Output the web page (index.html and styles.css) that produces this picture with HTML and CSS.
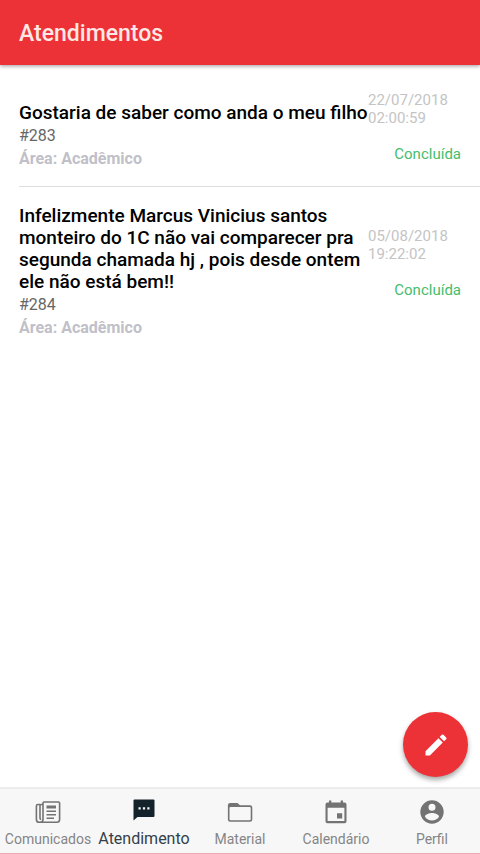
FILE: index.html
```html
<!DOCTYPE html>
<html lang="pt-BR">
<head>
<meta charset="utf-8">
<meta name="viewport" content="width=device-width, initial-scale=1">
<title>Atendimentos</title>
<link rel="stylesheet" href="styles.css">
</head>
<body>
<header class="toolbar"><h1 class="toolbar-title">Atendimentos</h1></header>
<main class="content">
  <ul class="list">
    <li class="item">
      <div class="item-text">
        <h2 class="item-title">Gostaria de saber como anda o meu filho</h2>
        <p class="item-id">#283</p>
        <p class="item-area">Área: Acadêmico</p>
      </div>
      <div class="item-meta">
        <time class="item-date" datetime="2018-07-22T02:00:59">22/07/2018 02:00:59</time>
        <span class="item-status">Concluída</span>
      </div>
    </li>
    <li class="item">
      <div class="item-text">
        <h2 class="item-title">Infelizmente Marcus Vinicius santos monteiro do 1C não vai comparecer pra segunda chamada hj , pois desde ontem ele não está bem!!</h2>
        <p class="item-id">#284</p>
        <p class="item-area">Área: Acadêmico</p>
      </div>
      <div class="item-meta">
        <time class="item-date" datetime="2018-08-05T19:22:02">05/08/2018 19:22:02</time>
        <span class="item-status">Concluída</span>
      </div>
    </li>
  </ul>
</main>
<button class="fab" type="button" aria-label="Novo atendimento">
  <svg class="fab-icon" viewBox="0 0 24 24" aria-hidden="true"><path d="M3 17.25V21h3.75L17.81 9.94l-3.75-3.75L3 17.25zM20.71 7.04a1 1 0 0 0 0-1.41l-2.34-2.34a1 1 0 0 0-1.41 0l-1.83 1.83 3.75 3.75 1.83-1.83z"/></svg>
</button>
<nav class="tabs">
  <a class="tab" href="#comunicados">
    <svg class="tab-icon" viewBox="0 0 28 28" aria-hidden="true">
      <g fill="none" stroke="currentColor" stroke-width="1.6" stroke-linejoin="round">
        <path d="M10 4h14.6q1 0 1 1v16.500q0 2.700-2.700 2.700H5.200q-2.800 0-2.800-2.800V8q0-1.500 1.500-1.500H6"/>
        <path d="M10 4q-1 0-1 1v16.400q0 2.800-2.500 2.800"/>
        <path d="M9 6.500H7q-1 0-1 1V20q0 1.500 1.200 1.500"/>
      </g>
      <path d="M12.500 7.500H22v3H12.500zM12.500 12.500H22V14H12.500zM12.500 16H22v1.500H12.500zM12.500 19.500H20V21H12.500z"/>
    </svg>
    <span class="tab-label">Comunicados</span>
  </a>
  <a class="tab tab-active" href="#atendimento" aria-current="page">
    <svg class="tab-icon" viewBox="0 0 28 28" aria-hidden="true"><path fill-rule="evenodd" d="M4.500 3.500h19q1 0 1 1v15.500q0 1-1 1H7.500L3.500 24.500V4.500q0-1 1-1zM8.500 11.200v2.200h2.200v-2.200zM12.900 11.200v2.200h2.200v-2.200zM17.300 11.200v2.200h2.200v-2.200z"/></svg>
    <span class="tab-label">Atendimento</span>
  </a>
  <a class="tab" href="#material">
    <svg class="tab-icon" viewBox="0 0 28 28" aria-hidden="true"><path fill-rule="evenodd" d="M4.200 5h7.300l2.500 2.300h10q2.300 0 2.300 2.300v11.900q0 2.300-2.300 2.300H4.200q-2.300 0-2.300-2.300V7.300Q1.900 5 4.200 5zM4.500 9q-1 0-1 1v11.200q0 1 1 1h19.200q1 0 1-1V10q0-1-1-1z"/></svg>
    <span class="tab-label">Material</span>
  </a>
  <a class="tab" href="#calendario">
    <svg class="tab-icon" viewBox="0 0 28 28" aria-hidden="true"><path fill-rule="evenodd" d="M7 2.500h2.300v2h9.400v-2H21v2h1.500q2 0 2 2v16.700q0 2-2 2h-17q-2 0-2-2V6.500q0-2 2-2H7zM5.600 9.700v13.400h16.800V9.700zM15 15.200h5.200v5.300H15z"/></svg>
    <span class="tab-label">Calendário</span>
  </a>
  <a class="tab" href="#perfil">
    <svg class="tab-icon" viewBox="0 0 24 24" aria-hidden="true"><path d="M12 2a10 10 0 1 0 0 20 10 10 0 0 0 0-20zm0 3a3 3 0 1 1 0 6 3 3 0 0 1 0-6zm0 14.200a7.200 7.200 0 0 1-6-3.220c.03-1.990 4-3.080 6-3.080s5.970 1.090 6 3.080a7.200 7.200 0 0 1-6 3.220z"/></svg>
    <span class="tab-label">Perfil</span>
  </a>
</nav>
</body>
</html>
```
FILE: styles.css
```css
* { box-sizing: border-box; }

body {
  margin: 0;
  min-height: 100vh;
  display: flex;
  flex-direction: column;
  background: #fff;
  font-family: Roboto, "Liberation Sans", sans-serif;
  color: #000;
}

h1, h2, p, ul { margin: 0; padding: 0; }

.toolbar {
  padding: 20px 19px 17px;
  background: #ed3237;
  box-shadow: 0 1px 4px rgba(0, 0, 0, 0.4);
}

.toolbar-title {
  font-size: 23px;
  line-height: 28px;
  font-weight: 500;
  color: #fde8e4;
}

.content {
  flex: 1;
  padding-top: 19px;
}

.list { list-style: none; }

.item {
  display: flex;
  align-items: center;
  margin-left: 19px;
  padding-right: 19px;
}

.item + .item { border-top: 1px solid #dedede; }

.item-text {
  flex: 1;
  padding: 18px 0 16px;
}

.item-title {
  font-size: 19px;
  line-height: 22px;
  font-weight: 500;
}

.item-id {
  font-size: 16px;
  line-height: 24px;
  color: #666;
}

.item-area {
  font-size: 16px;
  line-height: 22px;
  font-weight: 700;
  color: #bfc0c8;
}

.item-meta {
  width: 93px;
  display: flex;
  flex-direction: column;
  gap: 16px;
  padding: 7px 0 21px;
}

.item-date {
  font-size: 15px;
  line-height: 18px;
  color: #c4c4c4;
}

.item-status {
  align-self: flex-end;
  font-size: 15px;
  line-height: 22px;
  color: #46bd6c;
}

.fab {
  position: fixed;
  right: 12px;
  bottom: 77px;
  width: 65px;
  height: 65px;
  display: flex;
  align-items: center;
  justify-content: center;
  padding: 0;
  border: 0;
  border-radius: 50%;
  background: #ed3237;
  color: #fff;
  box-shadow: 0 3px 5px rgba(0, 0, 0, 0.35);
}

.fab-icon {
  width: 28px;
  height: 28px;
  fill: currentColor;
}

.tabs {
  display: flex;
  height: 67px;
  background: #f7f7f7;
  border-top: 2px solid #ececec;
  border-bottom: 1px solid #eba9b4;
}

.tab {
  flex: 1 1 0;
  min-width: 0;
  display: flex;
  flex-direction: column;
  align-items: center;
  gap: 3px;
  padding-top: 9px;
  color: #737373;
  text-decoration: none;
}

.tab-icon {
  width: 28px;
  height: 28px;
  fill: currentColor;
}

.tab-label {
  font-size: 14px;
  line-height: 20px;
  white-space: nowrap;
  color: #858585;
}

.tab-active {
  padding-top: 7px;
  gap: 5px;
  color: #14232b;
}

.tab-active .tab-label {
  font-size: 16px;
  color: #32414a;
}
```
